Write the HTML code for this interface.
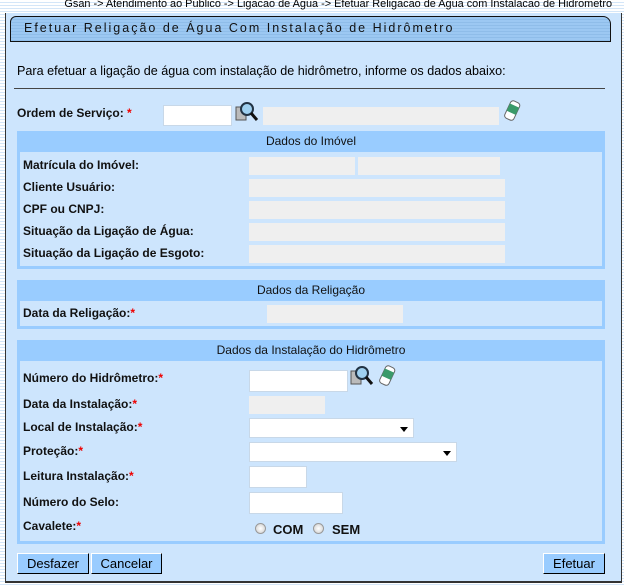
<!DOCTYPE html>
<html><head><meta charset="utf-8"><style>
*{margin:0;padding:0;box-sizing:border-box}
body{width:624px;height:586px;position:relative;overflow:hidden;font-family:"Liberation Sans",Arial,sans-serif;
background:repeating-linear-gradient(#fff 0 2px,#d4e6f8 2px 3px)}
.a{position:absolute}
.bc{right:12px;top:-2px;font-size:10.9px;color:#000;white-space:nowrap}
.panel{left:5px;top:13px;width:617px;height:570px;background:#cde5fd;border:1px solid #333;border-top:none;border-bottom:2px solid #333}
.tab{left:10px;top:16px;width:601px;height:26px;border:1px solid #111;border-radius:6px 8px 0 0;
background:repeating-linear-gradient(#9cc8f2 0 2px,#8fbde9 2px 3px);font-size:12.5px;letter-spacing:2px;padding:4px 0 0 13px;color:#111}
.t{font-size:12.6px;white-space:nowrap}
.b{font-weight:bold;font-size:12px;white-space:nowrap;color:#111}
.r{color:#e00}
.sec{left:17px;width:588px;border:3px solid #99ccff;border-top:none;background:#cde5fd}
.hd{position:absolute;left:-3px;right:-3px;top:0;height:21px;background:#99ccff;text-align:center;font-size:12px;line-height:20px;color:#111}
.in{background:#fff;border:1px solid #c8d8e8}
.g{background:#efefef}
.sel::after{content:"";position:absolute;right:5px;top:8px;border:4px solid transparent;border-top:5px solid #000}
.btn{top:553px;height:21px;background:#99ccff;border:1px solid #000;border-top-color:#fff;border-left-color:#fff;font-size:13px;text-align:center;line-height:19px}
.rad{width:11px;height:11px;border-radius:50%;border:1px solid #999;background:radial-gradient(#fff,#ccc)}
</style></head><body>
<div class="a bc">Gsan -&gt; Atendimento ao Publico -&gt; Ligacao de Agua -&gt; Efetuar Religacao de Agua com Instalacao de Hidrometro</div>
<div class="a panel"></div>
<div class="a tab">Efetuar Religação de Água Com Instalação de Hidrômetro</div>
<div class="a t" style="left:17px;top:64px">Para efetuar a ligação de água com instalação de hidrômetro, informe os dados abaixo:</div>
<div class="a" style="left:14px;top:88px;width:591px;height:1px;background:#444"></div>
<div class="a b" style="left:17px;top:106px">Ordem de Serviço: <span class="r">*</span></div>
<div class="a in" style="left:163px;top:105px;width:69px;height:21px"></div>
<svg class="a" style="left:235px;top:100px" width="26" height="24"><rect x="1" y="7" width="10" height="13" fill="#bbb" stroke="#555"/><circle cx="12" cy="9" r="6" fill="#9fd0f0" stroke="#234" stroke-width="2"/><line x1="16" y1="13" x2="22" y2="20" stroke="#111" stroke-width="3"/></svg>
<div class="a g" style="left:263px;top:107px;width:236px;height:18px"></div>
<svg class="a" style="left:502px;top:99px" width="20" height="24"><g transform="rotate(25 10 12)"><rect x="5" y="2" width="10" height="19" rx="3" fill="#fff" stroke="#666"/><rect x="5" y="6" width="10" height="8" fill="#3a9a6a"/></g></svg>

<div class="a sec" style="top:131px;height:138px"><div class="hd">Dados do Imóvel</div></div>
<div class="a b" style="left:23px;top:158px">Matrícula do Imóvel:</div>
<div class="a b" style="left:23px;top:180px">Cliente Usuário:</div>
<div class="a b" style="left:23px;top:202px">CPF ou CNPJ:</div>
<div class="a b" style="left:23px;top:224px">Situação da Ligação de Água:</div>
<div class="a b" style="left:23px;top:246px">Situação da Ligação de Esgoto:</div>
<div class="a g" style="left:249px;top:157px;width:106px;height:18px"></div>
<div class="a g" style="left:358px;top:157px;width:142px;height:18px"></div>
<div class="a g" style="left:249px;top:179px;width:256px;height:18px"></div>
<div class="a g" style="left:249px;top:201px;width:256px;height:18px"></div>
<div class="a g" style="left:249px;top:223px;width:256px;height:18px"></div>
<div class="a g" style="left:249px;top:245px;width:256px;height:18px"></div>

<div class="a sec" style="top:280px;height:49px"><div class="hd">Dados da Religação</div></div>
<div class="a b" style="left:23px;top:306px">Data da Religação:<span class="r">*</span></div>
<div class="a g" style="left:267px;top:305px;width:136px;height:18px"></div>

<div class="a sec" style="top:340px;height:204px"><div class="hd">Dados da Instalação do Hidrômetro</div></div>
<div class="a b" style="left:23px;top:371px">Número do Hidrômetro:<span class="r">*</span></div>
<div class="a in" style="left:249px;top:370px;width:99px;height:22px"></div>
<svg class="a" style="left:350px;top:364px" width="26" height="24"><rect x="1" y="7" width="10" height="13" fill="#bbb" stroke="#555"/><circle cx="12" cy="9" r="6" fill="#9fd0f0" stroke="#234" stroke-width="2"/><line x1="16" y1="13" x2="22" y2="20" stroke="#111" stroke-width="3"/></svg>
<svg class="a" style="left:377px;top:364px" width="20" height="24"><g transform="rotate(25 10 12)"><rect x="5" y="2" width="10" height="19" rx="3" fill="#fff" stroke="#666"/><rect x="5" y="6" width="10" height="8" fill="#3a9a6a"/></g></svg>
<div class="a b" style="left:23px;top:397px">Data da Instalação:<span class="r">*</span></div>
<div class="a g" style="left:249px;top:396px;width:76px;height:18px"></div>
<div class="a b" style="left:23px;top:420px">Local de Instalação:<span class="r">*</span></div>
<div class="a in sel" style="left:249px;top:418px;width:165px;height:20px"></div>
<div class="a b" style="left:23px;top:444px">Proteção:<span class="r">*</span></div>
<div class="a in sel" style="left:249px;top:442px;width:208px;height:20px"></div>
<div class="a b" style="left:23px;top:469px">Leitura Instalação:<span class="r">*</span></div>
<div class="a in" style="left:249px;top:466px;width:58px;height:22px"></div>
<div class="a b" style="left:23px;top:495px">Número do Selo:</div>
<div class="a in" style="left:249px;top:492px;width:94px;height:22px"></div>
<div class="a b" style="left:23px;top:519px">Cavalete:<span class="r">*</span></div>
<div class="a rad" style="left:255px;top:523px"></div>
<div class="a b" style="left:273px;top:522px;font-size:13px">COM</div>
<div class="a rad" style="left:313px;top:523px"></div>
<div class="a b" style="left:332px;top:522px;font-size:13px">SEM</div>

<div class="a btn" style="left:17px;width:72px">Desfazer</div>
<div class="a btn" style="left:91px;width:71px">Cancelar</div>
<div class="a btn" style="left:543px;width:62px">Efetuar</div>
</body></html>
